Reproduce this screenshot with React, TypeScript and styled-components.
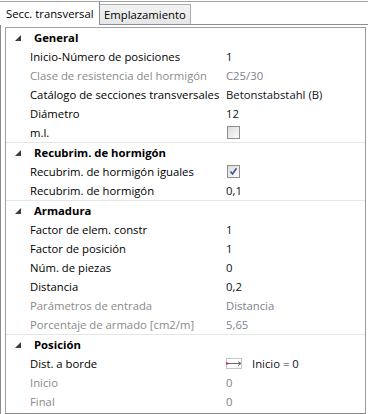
import React from "react";
import styled, { createGlobalStyle } from "styled-components";

const GlobalStyle = createGlobalStyle`
  html, body {
    margin: 0;
    padding: 0;
    background: #ffffff;
  }
  body {
    font-family: "Open Sans", "Noto Sans", Arial, sans-serif;
    font-size: 11.3px;
  }
`;

const Window = styled.div`
  width: 368px;
  height: 414px;
  overflow: hidden;
  position: relative;
  background: #ffffff;
`;

const TabStrip = styled.div`
  display: flex;
  align-items: flex-end;
  height: 22px;
  margin-top: 1px;
  border-top: 1px solid #a0a0a0;
`;

const Tab = styled.div<{ $active?: boolean }>`
  box-sizing: border-box;
  display: flex;
  align-items: center;
  color: #000;
  white-space: nowrap;
  ${({ $active }) =>
    $active
      ? `
    height: 23px;
    margin-bottom: -1px;
    padding: 0 4px 1px 6px;
    background: #ffffff;
    border-right: 1px solid #898c95;
    position: relative;
    z-index: 1;
    width: 100px;
  `
      : `
    height: 20px;
    padding: 0 3px 0 4px;
    width: 91px;
    background: linear-gradient(#f3f3f3, #e6e6e6);
    border: 1px solid #acacac;
    border-left: none;
    border-bottom: none;
  `}
`;

const Panel = styled.div`
  box-sizing: border-box;
  width: 372px;
  height: 391px;
  border: 1px solid #898c95;
  padding: 2px 0 0 4px;
`;

const Grid = styled.div`
  box-sizing: border-box;
  width: 361px;
  height: 387px;
  border: 1px solid #a0a0a0;
  border-bottom-color: #8a8a8a;
  border-right-color: #9a9a9a;
  background: #ffffff;
`;

const Group = styled.div<{ $first?: boolean }>`
  border-top: ${({ $first }) => ($first ? "none" : "1px solid #e6e6e6")};
`;

const HeaderRow = styled.div`
  display: flex;
  align-items: center;
  height: 19px;
  padding-left: 9px;
  font-weight: 700;
  color: #000;
`;

const Expander = styled.svg`
  width: 6px;
  height: 6px;
  margin-right: 13px;
  flex: none;
`;

const Row = styled.div`
  display: flex;
  align-items: center;
  height: 19px;
`;

const Label = styled.div<{ $disabled?: boolean }>`
  box-sizing: border-box;
  width: 220px;
  padding-left: 24px;
  white-space: nowrap;
  overflow: hidden;
  color: ${({ $disabled }) => ($disabled ? "#8a8a8a" : "#000000")};
`;

const Value = styled.div<{ $disabled?: boolean }>`
  display: flex;
  align-items: center;
  gap: 9px;
  white-space: nowrap;
  color: ${({ $disabled }) => ($disabled ? "#7d7f91" : "#10101c")};
`;

const CheckBox = styled.div`
  box-sizing: border-box;
  width: 13px;
  height: 13px;
  margin-left: 1px;
  border: 1px solid #8f8f8f;
  background: linear-gradient(135deg, #dcdcdc, #fbfbfb);
  display: flex;
  align-items: center;
  justify-content: center;
`;

function Triangle() {
  return (
    <Expander viewBox="0 0 6 6">
      <polygon points="6,0 6,6 0,6" fill="#3c3c3c" />
    </Expander>
  );
}

function Check({ checked }: { checked?: boolean }) {
  return (
    <CheckBox>
      {checked && (
        <svg width="9" height="9" viewBox="0 0 9 9">
          <path d="M1.5 4.5 L3.5 7 L7.5 1.2" stroke="#3f5596" strokeWidth="1.6" fill="none" />
        </svg>
      )}
    </CheckBox>
  );
}

function EdgeIcon() {
  return (
    <svg width="17" height="11" viewBox="0 0 17 11">
      <rect x="0.5" y="0.5" width="15" height="10" fill="none" stroke="#8a8a8a" strokeDasharray="1 1" />
      <line x1="1" y1="5.5" x2="15" y2="5.5" stroke="#6a6a6a" strokeWidth="1" />
      <path d="M12 3.5 L15 5.5 L12 7.5" stroke="#6a6a6a" fill="none" strokeWidth="1" />
      <rect x="0" y="4.5" width="2" height="2" fill="#e0182a" />
    </svg>
  );
}

type Item = {
  label: string;
  value?: React.ReactNode;
  disabled?: boolean;
};

const groups: { title: string; items: Item[] }[] = [
  {
    title: "General",
    items: [
      { label: "Inicio-Número de posiciones", value: "1" },
      { label: "Clase de resistencia del hormigón", value: "C25/30", disabled: true },
      { label: "Catálogo de secciones transversales", value: "Betonstabstahl (B)" },
      { label: "Diámetro", value: "12" },
      { label: "m.l.", value: <Check /> },
    ],
  },
  {
    title: "Recubrim. de hormigón",
    items: [
      { label: "Recubrim. de hormigón iguales", value: <Check checked /> },
      { label: "Recubrim. de hormigón", value: "0,1" },
    ],
  },
  {
    title: "Armadura",
    items: [
      { label: "Factor de elem. constr", value: "1" },
      { label: "Factor de posición", value: "1" },
      { label: "Núm. de piezas", value: "0" },
      { label: "Distancia", value: "0,2" },
      { label: "Parámetros de entrada", value: "Distancia", disabled: true },
      { label: "Porcentaje de armado [cm2/m]", value: "5,65", disabled: true },
    ],
  },
  {
    title: "Posición",
    items: [
      {
        label: "Dist. a borde",
        value: (
          <>
            <EdgeIcon />
            <span>Inicio = 0</span>
          </>
        ),
      },
      { label: "Inicio", value: "0", disabled: true },
      { label: "Final", value: "0", disabled: true },
    ],
  },
];

export default function App() {
  return (
    <Window>
      <GlobalStyle />
      <TabStrip>
        <Tab $active>Secc. transversal</Tab>
        <Tab>Emplazamiento</Tab>
      </TabStrip>
      <Panel>
        <Grid>
          {groups.map((g, gi) => (
            <Group key={g.title} $first={gi === 0}>
              <HeaderRow>
                <Triangle />
                {g.title}
              </HeaderRow>
              {g.items.map((it) => (
                <Row key={it.label}>
                  <Label $disabled={it.disabled}>{it.label}</Label>
                  <Value $disabled={it.disabled}>{it.value}</Value>
                </Row>
              ))}
            </Group>
          ))}
        </Grid>
      </Panel>
    </Window>
  );
}
